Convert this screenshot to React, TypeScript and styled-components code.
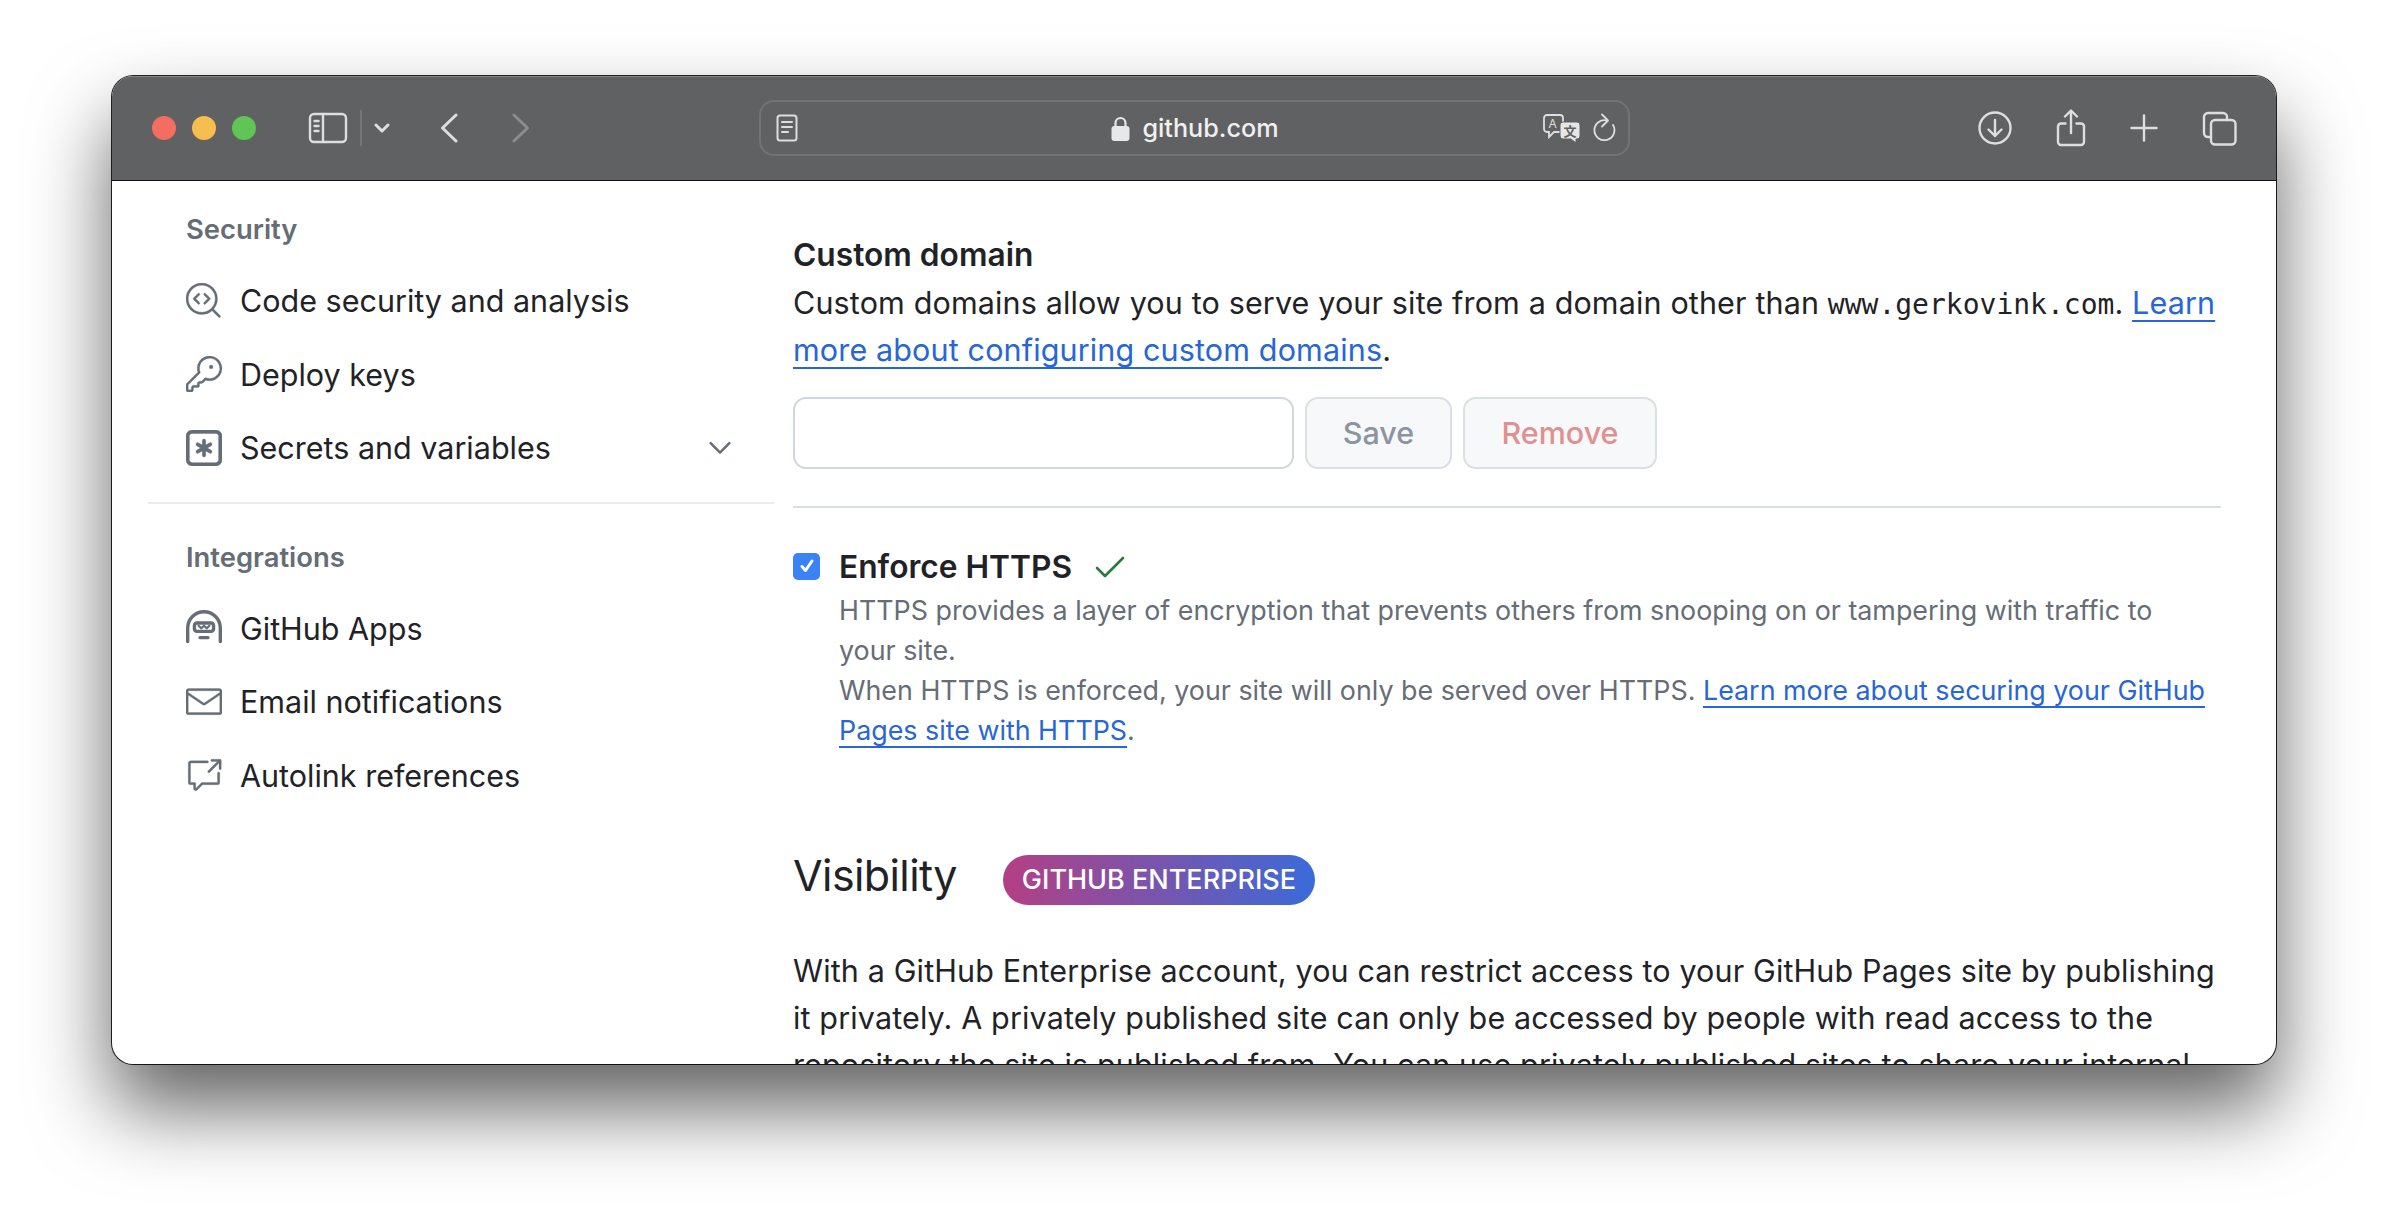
import React from "react"
import styled, { createGlobalStyle } from "styled-components"
import { GoChevronDown, GoCodescan, GoCrossReference, GoKey, GoMail } from "react-icons/go"

const GlobalStyle = createGlobalStyle`
  html, body {
    margin: 0;
    padding: 0;
    background: #fff;
  }
  body {
    font-family: Inter, "Noto Sans", sans-serif;
    color: #1f2328;
  }
`

const Page = styled.div`
  width: 2388px;
  height: 1212px;
  padding: 76px 112px 148px;
  box-sizing: border-box;
  overflow: hidden;
`

const Browser = styled.div`
  height: 988px;
  display: flex;
  flex-direction: column;
  border-radius: 21px;
  background: #fff;
  overflow: hidden;
  box-shadow: 0 0 0 1px rgba(0, 0, 0, 0.85), 0 44px 80px rgba(0, 0, 0, 0.62);
`

const Toolbar = styled.header`
  flex: none;
  height: 105px;
  box-sizing: border-box;
  display: flex;
  align-items: center;
  background: #606162;
  border-bottom: 1px solid #111;
  box-shadow: inset 0 2px 1px -1px #8a8a8a;
  color: #dedede;
`

const TrafficLights = styled.div`
  display: flex;
  gap: 16px;
  margin-left: 40px;
`

const Light = styled.span<{ $color: string }>`
  width: 24px;
  height: 24px;
  border-radius: 50%;
  background: ${props => props.$color};
`

const ToolGroup = styled.div<{ $left: number; $gap?: number }>`
  display: flex;
  align-items: center;
  margin-left: ${props => props.$left}px;
  gap: ${props => props.$gap ?? 0}px;
`

const ToolIcon = styled.svg<{ $dim?: boolean; $weight?: number }>`
  display: block;
  fill: none;
  stroke: ${props => (props.$dim ? "#8b8c8c" : "#dedede")};
  stroke-width: ${props => props.$weight ?? 2.4};
  stroke-linecap: round;
  stroke-linejoin: round;
`

const ToolDivider = styled.span`
  width: 2px;
  height: 36px;
  background: #757677;
  margin: 0 12px 0 12px;
`

const UrlBar = styled.div`
  width: 871px;
  height: 56px;
  box-sizing: border-box;
  margin-left: 229px;
  padding: 0 12px 0 15px;
  display: flex;
  align-items: center;
  border: 2px solid #727374;
  border-radius: 15px;
`

const UrlCenter = styled.div`
  flex: 1;
  display: flex;
  justify-content: center;
  align-items: center;
  gap: 12px;
  margin-left: 50px;
  font-size: 25.2px;
  font-weight: 500;
  color: #f0f0f0;
`

const UrlActions = styled.div`
  display: flex;
  align-items: center;
  gap: 10px;
`

const RightTools = styled.div`
  display: flex;
  align-items: center;
  gap: 44px;
  margin-left: 348px;
`

const Body = styled.div`
  flex: 1;
  min-height: 0;
  display: flex;
  overflow: hidden;
`

const Sidebar = styled.nav`
  flex: none;
  width: 626px;
  margin-left: 36px;
  padding-top: 29px;
`

const NavHeading = styled.h3`
  margin: 0;
  padding-left: 38px;
  font-size: 27.4px;
  line-height: 38px;
  font-weight: 600;
  color: #656d76;
`

const NavList = styled.ul`
  list-style: none;
  margin: 16px 0 0;
  padding: 0;
`

const NavRow = styled.li`
  height: 73.5px;
  padding: 0 36px 0 38px;
  display: flex;
  align-items: center;
  gap: 18px;
  font-size: 30.5px;
  color: #1f2328;

  > svg {
    flex: none;
    color: #656d76;
    stroke: currentColor;
    stroke-width: 0.2px;
  }
`

const NavChevron = styled(GoChevronDown)`
  margin-left: auto;
`

const NavDivider = styled.hr`
  height: 2px;
  border: 0;
  margin: 17px 0 34px;
  background: #e8ecf0;
`

const Main = styled.main`
  flex: 1;
  min-width: 0;
  padding: 50px 55px 0 19px;
`

const SectionTitle = styled.h4`
  margin: 0;
  font-size: 31.7px;
  line-height: 48px;
  font-weight: 600;
`

const Paragraph = styled.p<{ $top?: number }>`
  margin: ${props => props.$top ?? 0}px 0 0;
  font-size: 30.5px;
  line-height: 47.3px;
  letter-spacing: 0.14px;
`

const Mono = styled.code`
  font-family: "DejaVu Sans Mono", "Liberation Mono", monospace;
  font-size: 28px;
  line-height: 1;
  letter-spacing: 0;
`

const TextLink = styled.a`
  color: #2766d6;
  text-decoration: underline;
  text-underline-offset: 6px;
  text-decoration-thickness: 2px;
`

const FormRow = styled.div`
  display: flex;
  gap: 11px;
  margin-top: 23px;
  padding-bottom: 37px;
  border-bottom: 2px solid #d8dee4;
`

const DomainInput = styled.input`
  width: 501px;
  height: 72px;
  box-sizing: border-box;
  border: 2px solid #d0d7de;
  border-radius: 13px;
  background: #fff;
`

const GhostButton = styled.button<{ $danger?: boolean; $w: number }>`
  width: ${props => props.$w}px;
  height: 72px;
  border: 2px solid #dadfe4;
  border-radius: 13px;
  background: #f6f8fa;
  font-family: inherit;
  font-size: 30.5px;
  font-weight: 500;
  color: ${props => (props.$danger ? "#e09090" : "#8c959f")};
`

const CheckRow = styled.div`
  display: flex;
  gap: 19px;
  margin-top: 38px;
`

const CheckBox = styled.span`
  flex: none;
  width: 27px;
  height: 27px;
  margin-top: 7px;
  border-radius: 5px;
  background: #3b82f6;
  display: flex;
  align-items: center;
  justify-content: center;
`

const CheckBody = styled.div`
  flex: 1;
  min-width: 0;
`

const CheckTitle = styled.div`
  display: flex;
  align-items: center;
  gap: 23px;
  font-size: 31.7px;
  line-height: 42px;
  font-weight: 600;
`

const Note = styled.p`
  max-width: 1372px;
  margin: 2px 0 0;
  font-size: 26.85px;
  line-height: 40px;
  color: #656d76;
`

const HeadingRow = styled.div`
  display: flex;
  align-items: center;
  gap: 46px;
  margin-top: 95px;
`

const Heading = styled.h2`
  margin: 0;
  font-size: 43px;
  line-height: 60px;
  letter-spacing: -0.6px;
  font-weight: 400;
`

const Badge = styled.span`
  height: 50px;
  padding: 0 19px;
  display: flex;
  align-items: center;
  border-radius: 25px;
  margin-top: 10px;
  background: linear-gradient(90deg, #b43f84, #3a6bd9);
  color: #fff;
  font-size: 27px;
  font-weight: 500;
`

const SidebarToggle = () => (
  <ToolIcon width="40" height="32" viewBox="0 0 40 32">
    <rect x="2" y="2" width="36" height="28" rx="4" />
    <path d="M15 2v28M6.5 9h4M6.5 14h4M6.5 19h4" />
  </ToolIcon>
)

const SmallChevron = () => (
  <ToolIcon width="16" height="10" viewBox="0 0 16 10" $weight={3}>
    <path d="M2 2l6 6 6-6" />
  </ToolIcon>
)

const Back = () => (
  <ToolIcon width="18" height="30" viewBox="0 0 18 30" $weight={3}>
    <path d="M16 2L2.5 15 16 28" />
  </ToolIcon>
)

const Forward = () => (
  <ToolIcon $dim width="18" height="30" viewBox="0 0 18 30" $weight={3}>
    <path d="M2 2l13.5 13L2 28" />
  </ToolIcon>
)

const Reader = () => (
  <ToolIcon width="22" height="28" viewBox="0 0 22 28" $weight={2}>
    <rect x="1.5" y="1.5" width="19" height="25" rx="2.5" />
    <path d="M6 8h10M6 13h10M6 18h6" />
  </ToolIcon>
)

const Lock = () => (
  <svg width="19" height="25" viewBox="0 0 19 25" fill="#e8e8e8">
    <rect x="0.5" y="10" width="18" height="15" rx="3" />
    <path d="M4.5 11V7a5 5 0 0 1 10 0v4" fill="none" stroke="#e8e8e8" strokeWidth="2.2" />
  </svg>
)

const Reload = () => (
  <ToolIcon width="24" height="30" viewBox="0 0 24 30" $weight={1.8}>
    <path d="M15 7.5A10 10 0 1 0 21 12" />
    <path d="M10 1.5l6 6-6 6" />
  </ToolIcon>
)

const Download = () => (
  <ToolIcon width="34" height="34" viewBox="0 0 34 34">
    <circle cx="17" cy="17" r="15.5" />
    <path d="M17 9v16M10.5 18.5l6.5 6.5 6.5-6.5" />
  </ToolIcon>
)

const Share = () => (
  <ToolIcon width="30" height="38" viewBox="0 0 30 38">
    <path d="M9.5 14.5H5a3 3 0 0 0-3 3V33a3 3 0 0 0 3 3h20a3 3 0 0 0 3-3V17.5a3 3 0 0 0-3-3h-4.5M15 24V2M9 7.5L15 1.5l6 6" />
  </ToolIcon>
)

const Plus = () => (
  <ToolIcon width="28" height="28" viewBox="0 0 28 28">
    <path d="M14 1.5v25M1.5 14h25" />
  </ToolIcon>
)

const Tabs = () => (
  <ToolIcon width="35" height="35" viewBox="0 0 35 35">
    <rect x="9" y="9" width="24.5" height="24.5" rx="4" />
    <path d="M9 26H6a4 4 0 0 1-4-4V6a4 4 0 0 1 4-4h15a4 4 0 0 1 4 4v3" />
  </ToolIcon>
)

const Translate = () => (
  <svg width="40" height="30" viewBox="0 0 40 30">
    <path d="M5 2h13a3 3 0 0 1 3 3v11a3 3 0 0 1-3 3h-6l-5 5v-5H5a3 3 0 0 1-3-3V5a3 3 0 0 1 3-3z" fill="none" stroke="#dedede" strokeWidth="1.8" />
    <text x="6.5" y="15" fontSize="12" fontFamily="Inter" fill="#dedede">A</text>
    <path d="M21 9h14a3 3 0 0 1 3 3v11a3 3 0 0 1-3 3h-1v4l-5-4h-8a3 3 0 0 1-3-3V12a3 3 0 0 1 3-3z" fill="#e6e6e6" stroke="#606162" strokeWidth="1" />
    <text x="21.5" y="23" fontSize="13" fontWeight="700" fontFamily="Noto Sans CJK SC" fill="#606162">文</text>
  </svg>
)

const KeyAsterisk = () => (
  <svg width="36" height="36" viewBox="0 0 16 16" fill="currentColor">
    <path d="M0 2.75A2.75 2.75 0 0 1 2.75 0h10.5A2.75 2.75 0 0 1 16 2.75v10.5A2.75 2.75 0 0 1 13.25 16H2.75A2.75 2.75 0 0 1 0 13.25ZM2.75 1.5c-.69 0-1.25.56-1.25 1.25v10.5c0 .69.56 1.25 1.25 1.25h10.5c.69 0 1.25-.56 1.25-1.25V2.75c0-.69-.56-1.25-1.25-1.25Z" />
    <path d="M8 4a.75.75 0 0 1 .75.75V6.7l1.69-.975a.75.75 0 0 1 .75 1.3L9.5 8l1.69.976a.75.75 0 0 1-.75 1.298L8.75 9.3v1.951a.75.75 0 0 1-1.5 0V9.299l-1.69.976a.75.75 0 0 1-.75-1.3L6.5 8l-1.69-.975a.75.75 0 0 1 .75-1.3l1.69.976V4.75A.75.75 0 0 1 8 4Z" />
  </svg>
)

// react-icons ships a newer hubot than the one in the screenshot, so this one is by hand
const Hubot = () => (
  <svg width="36" height="36" viewBox="0 0 16 16" fill="none">
    <path d="M.75 14V8a7.25 7.25 0 0 1 14.5 0v6" strokeWidth="1.5" strokeLinecap="round" />
    <rect x="3.75" y="5.75" width="8.5" height="3.75" rx="1.1" strokeWidth="1.5" />
    <path d="M5.6 7l1.2 1.1L8 7l1.2 1.1L10.4 7" strokeWidth="1" strokeLinecap="round" strokeLinejoin="round" />
    <path d="M6.25 12.25h3.5" strokeWidth="1.5" strokeLinecap="round" />
  </svg>
)

const App = (): JSX.Element => {
  return (
    <Page>
      <GlobalStyle />
      <Browser>
        <Toolbar>
          <TrafficLights>
            <Light $color="#f36d60" />
            <Light $color="#f6be4f" />
            <Light $color="#60c554" />
          </TrafficLights>
          <ToolGroup $left={52}>
            <SidebarToggle />
            <ToolDivider />
            <SmallChevron />
          </ToolGroup>
          <ToolGroup $left={50} $gap={54}>
            <Back />
            <Forward />
          </ToolGroup>
          <UrlBar>
            <Reader />
            <UrlCenter>
              <Lock />
              github.com
            </UrlCenter>
            <UrlActions>
              <Translate />
              <Reload />
            </UrlActions>
          </UrlBar>
          <RightTools>
            <Download />
            <Share />
            <Plus />
            <Tabs />
          </RightTools>
        </Toolbar>
        <Body>
          <Sidebar>
            <NavHeading>Security</NavHeading>
            <NavList>
              <NavRow><GoCodescan size={36} />Code security and analysis</NavRow>
              <NavRow><GoKey size={36} />Deploy keys</NavRow>
              <NavRow><KeyAsterisk />Secrets and variables<NavChevron size={36} /></NavRow>
            </NavList>
            <NavDivider />
            <NavHeading>Integrations</NavHeading>
            <NavList>
              <NavRow><Hubot />GitHub Apps</NavRow>
              <NavRow><GoMail size={36} />Email notifications</NavRow>
              <NavRow><GoCrossReference size={36} />Autolink references</NavRow>
            </NavList>
          </Sidebar>
          <Main>
            <SectionTitle>Custom domain</SectionTitle>
            <Paragraph>
              Custom domains allow you to serve your site from a domain other than <Mono>www.gerkovink.com</Mono>. <TextLink href="#">Learn more about configuring custom domains</TextLink>.
            </Paragraph>
            <FormRow>
              <DomainInput />
              <GhostButton $w={147}>Save</GhostButton>
              <GhostButton $w={194} $danger>Remove</GhostButton>
            </FormRow>
            <CheckRow>
              <CheckBox>
                <svg width="18" height="18" viewBox="0 0 18 18" fill="none" stroke="#fff" strokeWidth="3" strokeLinecap="round" strokeLinejoin="round">
                  <path d="M4 9.5l3.5 4L14 4" />
                </svg>
              </CheckBox>
              <CheckBody>
                <CheckTitle>
                  Enforce HTTPS
                  <svg width="30" height="22" viewBox="0 0 30 22" fill="none" stroke="#2a7a3b" strokeWidth="2.6" strokeLinecap="round" strokeLinejoin="round">
                    <path d="M2 12l8 8L28 2" />
                  </svg>
                </CheckTitle>
                <Note>
                  HTTPS provides a layer of encryption that prevents others from snooping on or tampering with traffic to your site.<br />
                  When HTTPS is enforced, your site will only be served over HTTPS. <TextLink href="#">Learn more about securing your GitHub Pages site with HTTPS</TextLink>.
                </Note>
              </CheckBody>
            </CheckRow>
            <HeadingRow>
              <Heading>Visibility</Heading>
              <Badge>GITHUB ENTERPRISE</Badge>
            </HeadingRow>
            <Paragraph $top={42}>
              With a GitHub Enterprise account, you can restrict access to your GitHub Pages site by publishing it privately. A privately published site can only be accessed by people with read access to the repository the site is published from. You can use privately published sites to share your internal documentation or knowledge base with members of your enterprise.
            </Paragraph>
          </Main>
        </Body>
      </Browser>
    </Page>
  )
}

export default App
